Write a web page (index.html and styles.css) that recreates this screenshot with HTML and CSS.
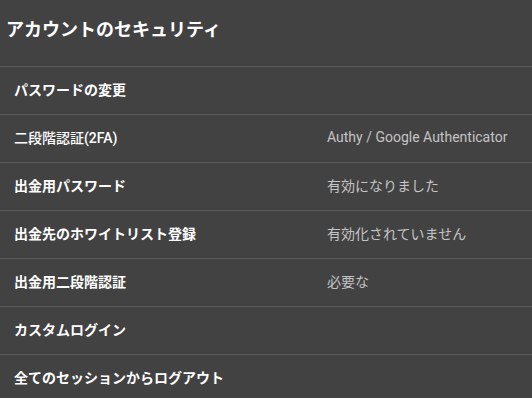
FILE: index.html
```html
<!DOCTYPE html>
<html lang="ja">
<head>
    <meta charset="UTF-8">
    <meta name="viewport" content="width=device-width, initial-scale=1.0">
    <title>アカウントのセキュリティ</title>
    <link rel="stylesheet" href="styles.css">
</head>
<body>

    <div class="security">
        <h1 class="security-title">アカウントのセキュリティ</h1>

        <div class="security-row">
            <span class="row-label">パスワードの変更</span>
            <span class="row-value"></span>
        </div>
        <div class="security-row">
            <span class="row-label light">二段階認証(2FA)</span>
            <span class="row-value">Authy / Google Authenticator</span>
        </div>
        <div class="security-row">
            <span class="row-label">出金用パスワード</span>
            <span class="row-value">有効になりました</span>
        </div>
        <div class="security-row">
            <span class="row-label">出金先のホワイトリスト登録</span>
            <span class="row-value">有効化されていません</span>
        </div>
        <div class="security-row">
            <span class="row-label">出金用二段階認証</span>
            <span class="row-value">必要な</span>
        </div>
        <div class="security-row">
            <span class="row-label">カスタムログイン</span>
            <span class="row-value"></span>
        </div>
        <div class="security-row">
            <span class="row-label">全てのセッションからログアウト</span>
            <span class="row-value"></span>
        </div>
    </div>

</body>
</html>
```

FILE: styles.css
```css
html, body {
    margin: 0;
    background: #424242;
}

body {
    font-family: 'Roboto', 'Noto Sans CJK JP', sans-serif;
    color: #ffffff;
}

.security-title {
    margin: 0;
    padding: 19px 6px 25px;
    font-size: 18px;
    line-height: 22px;
    font-weight: bold;
}

.security-row {
    box-sizing: border-box;
    display: grid;
    grid-template-columns: 313px 1fr;
    align-items: center;
    height: 48px;
    padding: 0 0 4px 14px;
    border-top: 1px solid #5b5b5b;
    font-size: 14px;
}

.row-label {
    font-weight: bold;
}

.row-label.light {
    font-weight: 500;
}

.row-value {
    color: #c4c4c4;
}
```
